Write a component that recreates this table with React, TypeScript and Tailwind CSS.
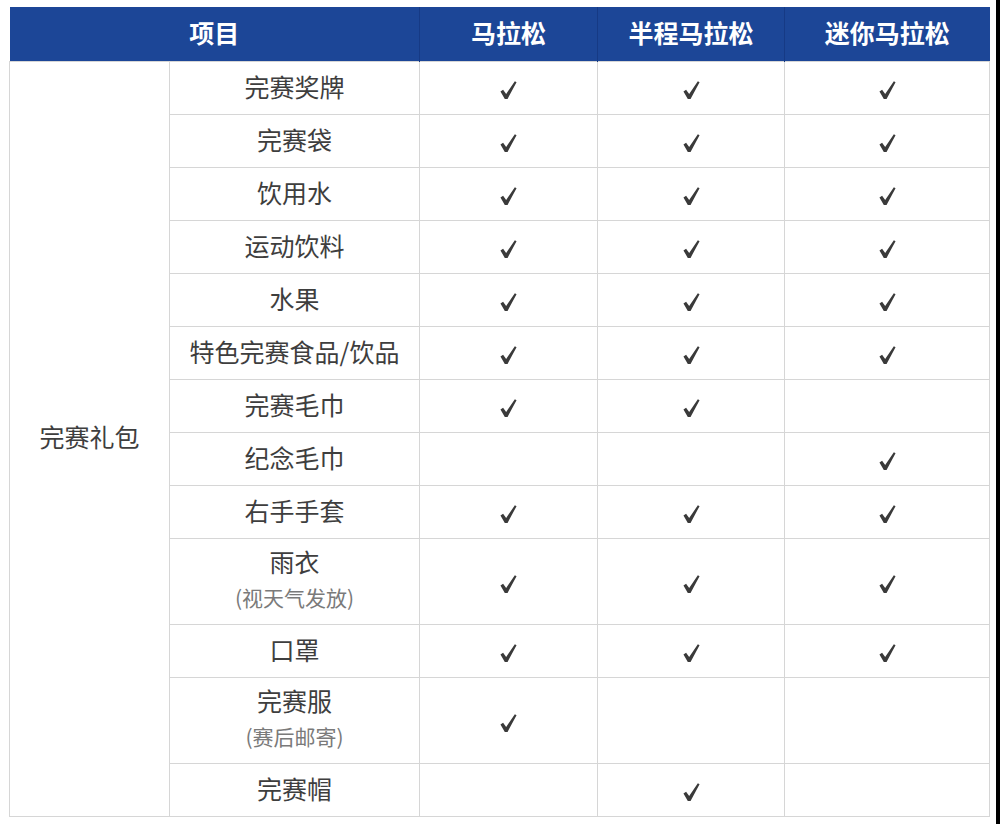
import React from "react";

type Row = {
  name: string;
  note?: string;
  marks: [boolean, boolean, boolean];
};

const ROWS: Row[] = [
  { name: "完赛奖牌", marks: [true, true, true] },
  { name: "完赛袋", marks: [true, true, true] },
  { name: "饮用水", marks: [true, true, true] },
  { name: "运动饮料", marks: [true, true, true] },
  { name: "水果", marks: [true, true, true] },
  { name: "特色完赛食品/饮品", marks: [true, true, true] },
  { name: "完赛毛巾", marks: [true, true, false] },
  { name: "纪念毛巾", marks: [false, false, true] },
  { name: "右手手套", marks: [true, true, true] },
  { name: "雨衣", note: "(视天气发放)", marks: [true, true, true] },
  { name: "口罩", marks: [true, true, true] },
  { name: "完赛服", note: "(赛后邮寄)", marks: [true, false, false] },
  { name: "完赛帽", marks: [false, true, false] },
];

const FONT = { fontFamily: '"Noto Sans CJK SC", "Noto Sans", sans-serif' };

// hand-drawn tick, thick at the bottom, thin at the top
function Check({ on }: { on: boolean }) {
  if (!on) return null;
  return (
    <svg viewBox="0 0 16 17" className="mx-auto mt-[5px] block h-[18px] w-[17px]">
      <path d="M0.4 9.9 L2.9 8.3 L5.8 12.2 L14 0.3 L15.6 1.1 L7.1 16.9 L4.5 16.9 Z" fill="#3a3a3a" />
    </svg>
  );
}

export default function App() {
  return (
    <div className="flex min-h-[824px] w-[1000px] bg-white" style={FONT}>
      <div className="flex-1 pl-[9px] pt-[7px]">
        <table className="w-[980px] table-fixed border-collapse">
          <colgroup>
            <col className="w-[160px]" />
            <col className="w-[250px]" />
            <col className="w-[178px]" />
            <col className="w-[187px]" />
            <col className="w-[205px]" />
          </colgroup>
          <thead>
            <tr className="h-[54px] bg-[#1c4697] text-[25px] font-bold text-white">
              <th colSpan={2} className="border-r border-[#163a85] pb-[2px] text-center">项目</th>
              <th className="border-r border-[#163a85] pb-[2px] text-center">马拉松</th>
              <th className="border-r border-[#163a85] pb-[2px] text-center">半程马拉松</th>
              <th className="pb-[2px] text-center">迷你马拉松</th>
            </tr>
          </thead>
          <tbody className="text-[25px] text-[#3e3e3e]">
            {ROWS.map((r, i) => (
              <tr key={r.name} className={r.note ? "h-[86px]" : "h-[53px]"}>
                {i === 0 && (
                  <td
                    rowSpan={ROWS.length}
                    className="border border-[#d6d6d6] pb-[4px] text-center"
                  >
                    完赛礼包
                  </td>
                )}
                <td className="border border-[#d6d6d6] pb-[4px] text-center leading-[30px]">
                  <div>{r.name}</div>
                  {r.note && <div className="mt-[6px] text-[21px] text-[#7a7a7a]">{r.note}</div>}
                </td>
                {r.marks.map((m, j) => (
                  <td key={j} className="border border-[#d6d6d6] text-center">
                    <Check on={m} />
                  </td>
                ))}
              </tr>
            ))}
          </tbody>
        </table>
      </div>
      <div className="w-[4px] bg-black" />
    </div>
  );
}
